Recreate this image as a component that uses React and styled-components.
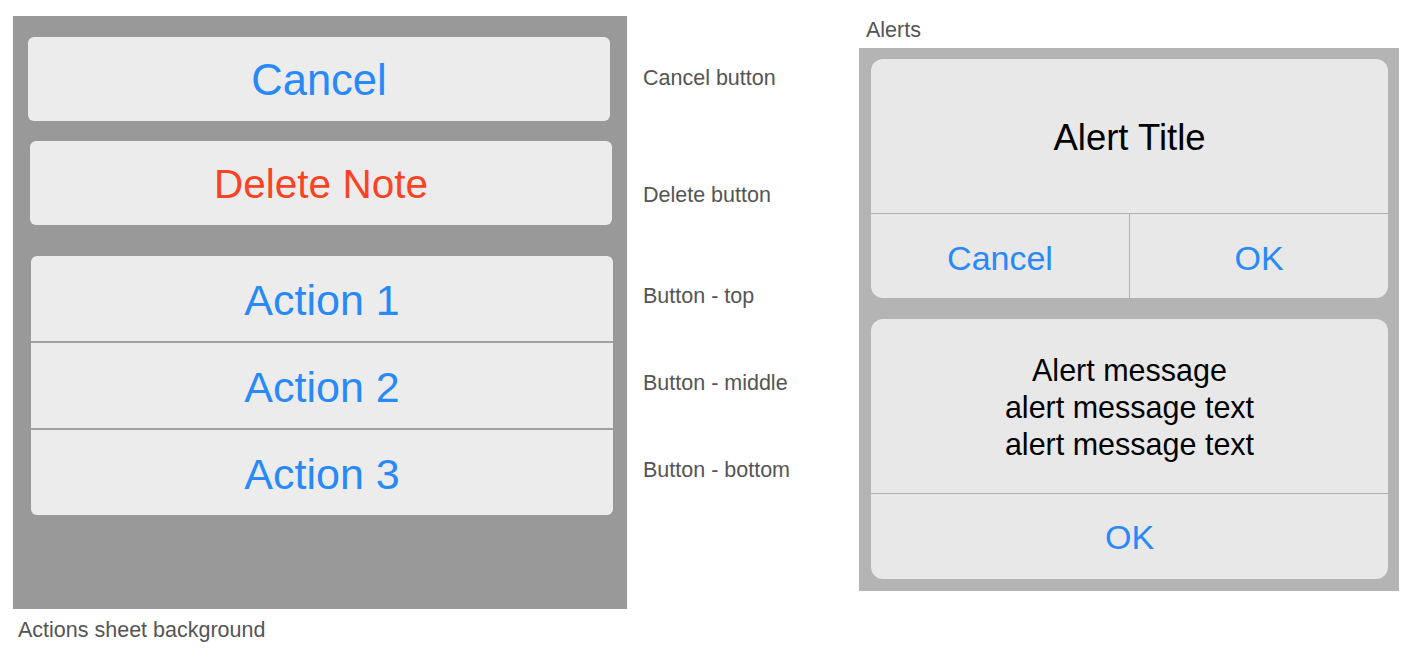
import React from "react";
import styled, { createGlobalStyle } from "styled-components";

const GlobalStyle = createGlobalStyle`
  html, body {
    margin: 0;
    padding: 0;
    background: #ffffff;
  }
  body {
    font-family: "Liberation Sans", Arial, sans-serif;
  }
`;

function App() {
  return (
    <>
      <GlobalStyle />
      <Page>
        <SheetColumn>
          <SheetPanel>
            <SheetButton $offset={15}>Cancel</SheetButton>
            <SheetButton $offset={17} $danger>
              Delete Note
            </SheetButton>
            <ActionGroup>
              <GroupButton>Action 1</GroupButton>
              <GroupButton>Action 2</GroupButton>
              <GroupButton>Action 3</GroupButton>
            </ActionGroup>
          </SheetPanel>
          <Caption>Actions sheet background</Caption>
        </SheetColumn>

        <Notes>
          <Note $top={66}>Cancel button</Note>
          <Note $top={93}>Delete button</Note>
          <Note $top={77}>Button - top</Note>
          <Note $top={63}>Button - middle</Note>
          <Note $top={63}>Button - bottom</Note>
        </Notes>

        <AlertColumn>
          <AlertsLabel>Alerts</AlertsLabel>
          <AlertPanel>
            <AlertCard>
              <TitleArea>Alert Title</TitleArea>
              <ButtonRow>
                <AlertButton>Cancel</AlertButton>
                <AlertButton>OK</AlertButton>
              </ButtonRow>
            </AlertCard>
            <AlertCard>
              <MessageArea>
                Alert message
                <br />
                alert message text
                <br />
                alert message text
              </MessageArea>
              <ButtonRow>
                <AlertButton $single>OK</AlertButton>
              </ButtonRow>
            </AlertCard>
          </AlertPanel>
        </AlertColumn>
      </Page>
    </>
  );
}

const Page = styled.div`
  display: flex;
  align-items: flex-start;
  padding: 16px 0 0 13px;
  width: 1412px;
  height: 656px;
  box-sizing: border-box;
  overflow: hidden;
`;

const SheetColumn = styled.div`
  display: flex;
  flex-direction: column;
`;

const SheetPanel = styled.div`
  width: 614px;
  height: 593px;
  box-sizing: border-box;
  background: #999999;
  padding-top: 21px;
  display: flex;
  flex-direction: column;
`;

const SheetButton = styled.div`
  width: 582px;
  height: 84px;
  box-sizing: border-box;
  padding-top: 3px;
  margin-left: ${(p) => p.$offset}px;
  margin-bottom: 20px;
  border-radius: 6px;
  background: #ececec;
  display: flex;
  align-items: center;
  justify-content: center;
  font-size: ${(p) => (p.$danger ? 40.5 : 43.5)}px;
  color: ${(p) => (p.$danger ? "#fb4324" : "#2889f8")};
`;

const ActionGroup = styled.div`
  width: 582px;
  margin-left: 18px;
  margin-top: 11px;
  border-radius: 6px;
  overflow: hidden;
  background: #ececec;
  display: flex;
  flex-direction: column;
`;

const GroupButton = styled.div`
  height: 85px;
  box-sizing: border-box;
  padding-top: 4px;
  display: flex;
  align-items: center;
  justify-content: center;
  font-size: 43px;
  color: #2889f8;
  & + & {
    height: 87px;
    border-top: 2px solid #a2a2a2;
  }
`;

const Caption = styled.div`
  margin: 9px 0 0 5px;
  font-size: 21.5px;
  line-height: 24px;
  color: #555555;
`;

const Notes = styled.div`
  display: flex;
  flex-direction: column;
  width: 216px;
  margin-left: 16px;
  margin-top: -16px;
`;

const Note = styled.div`
  margin-top: ${(p) => p.$top}px;
  font-size: 21.5px;
  line-height: 24px;
  color: #555555;
  white-space: nowrap;
`;

const AlertColumn = styled.div`
  display: flex;
  flex-direction: column;
  margin-top: 2px;
`;

const AlertsLabel = styled.div`
  margin-left: 7px;
  margin-bottom: 6px;
  font-size: 21.5px;
  line-height: 24px;
  color: #555555;
`;

const AlertPanel = styled.div`
  width: 540px;
  height: 543px;
  box-sizing: border-box;
  background: #b4b4b4;
  padding: 11px 11px 0 12px;
  display: flex;
  flex-direction: column;
  gap: 21px;
`;

const AlertCard = styled.div`
  background: #e8e8e8;
  border-radius: 12px;
  overflow: hidden;
  display: flex;
  flex-direction: column;
`;

const TitleArea = styled.div`
  height: 155px;
  box-sizing: border-box;
  padding-top: 3px;
  display: flex;
  align-items: center;
  justify-content: center;
  font-size: 36.5px;
  color: #000000;
  border-bottom: 1px solid #b0b0b0;
`;

const MessageArea = styled.div`
  height: 175px;
  box-sizing: border-box;
  padding-top: 3px;
  display: flex;
  align-items: center;
  justify-content: center;
  text-align: center;
  font-size: 30.5px;
  line-height: 37px;
  color: #000000;
  border-bottom: 1px solid #b0b0b0;
`;

const ButtonRow = styled.div`
  display: flex;
`;

const AlertButton = styled.div`
  flex: 1;
  height: ${(p) => (p.$single ? 85 : 84)}px;
  box-sizing: border-box;
  padding-top: ${(p) => (p.$single ? 2 : 4)}px;
  display: flex;
  align-items: center;
  justify-content: center;
  font-size: 34px;
  color: #2889f8;
  & + & {
    border-left: 1px solid #b0b0b0;
  }
`;

export default App;
